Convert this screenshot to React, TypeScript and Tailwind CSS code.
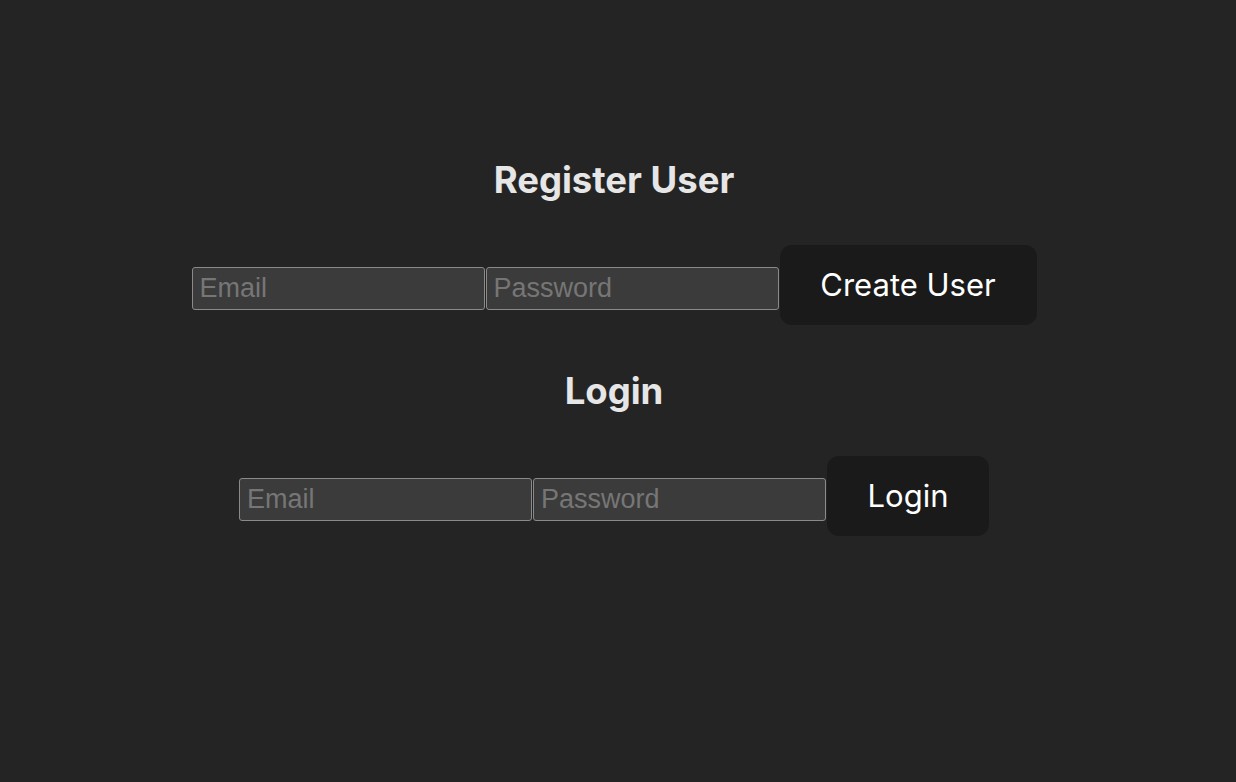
import { useState } from 'react';

function AuthRow({ button, wide }: { button: string; wide?: boolean }) {
  const [email, setEmail] = useState('');
  const [password, setPassword] = useState('');

  return (
    <div className="flex items-start gap-px">
      <input
        type="email"
        value={email}
        onChange={(e) => setEmail(e.target.value)}
        placeholder="Email"
        className="mt-[22px] h-[43px] w-[293px] rounded-[3px] border border-[#8a8a8a] bg-[#3b3b3b] px-[7px] font-['Liberation_Sans',Arial,sans-serif] text-[27px] text-white/90 outline-none placeholder:text-[#767676]"
      />
      <input
        type="password"
        value={password}
        onChange={(e) => setPassword(e.target.value)}
        placeholder="Password"
        className="mt-[22px] h-[43px] w-[293px] rounded-[3px] border border-[#8a8a8a] bg-[#3b3b3b] px-[7px] font-['Liberation_Sans',Arial,sans-serif] text-[27px] text-white/90 outline-none placeholder:text-[#767676]"
      />
      <button
        className={`h-[80px] rounded-xl bg-[#1a1a1a] text-[31px] text-white ${wide ? 'w-[257px]' : 'w-[162px]'}`}
      >
        {button}
      </button>
    </div>
  );
}

export default function App() {
  return (
    <div className="min-h-[782px] bg-[#242424] pt-[158px] pr-2 font-['Inter',sans-serif] text-white/90">
      <div className="flex flex-col items-center">
        <h1 className="mb-[43px] text-[36.5px] leading-[44px] font-bold text-[#e6e6e6]">Register User</h1>
        <AuthRow button="Create User" wide />
        <h1 className="mt-[44px] mb-[43px] text-[36.5px] leading-[44px] font-bold text-[#e6e6e6]">Login</h1>
        <AuthRow button="Login" />
      </div>
    </div>
  );
}
